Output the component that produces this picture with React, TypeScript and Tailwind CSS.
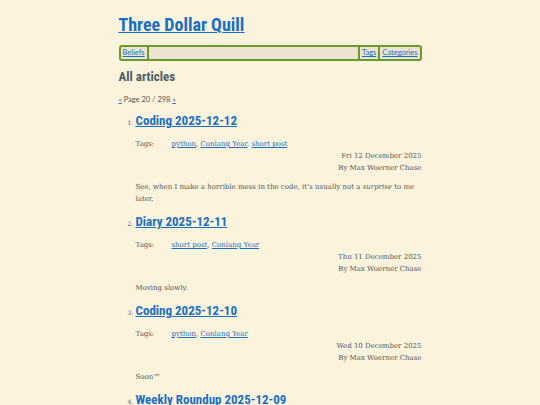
import React from "react";

const sans = { fontFamily: '"Liberation Sans Narrow", "Roboto Condensed", Lato, sans-serif' };
const small = { fontFamily: 'Lato, "Open Sans", sans-serif' };
const serif = { fontFamily: '"DejaVu Serif", "Liberation Serif", serif' };

type Post = { title: string; tags: string[]; date: string; body: React.ReactNode };

const posts: Post[] = [
  {
    title: "Coding 2025-12-12",
    tags: ["python", "Conlang Year", "short post"],
    date: "Fri 12 December 2025",
    body: (
      <>
        See, when I make a horrible mess in the code, it’s usually not a <em>surprise</em> to me later.
      </>
    ),
  },
  {
    title: "Diary 2025-12-11",
    tags: ["short post", "Conlang Year"],
    date: "Thu 11 December 2025",
    body: <>Moving slowly.</>,
  },
  {
    title: "Coding 2025-12-10",
    tags: ["python", "Conlang Year"],
    date: "Wed 10 December 2025",
    body: <>Soon™</>,
  },
  {
    title: "Weekly Roundup 2025-12-09",
    tags: ["Conlang Year"],
    date: "Tue 09 December 2025",
    body: <>Stuff.</>,
  },
];

export default function App() {
  return (
    <div className="h-[405px] w-full overflow-hidden bg-[#fbf3dc] text-[#555]">
      <div className="mx-auto w-[303px] pt-[14px]">
        <h1 className="text-[18px] font-bold leading-[22px] text-[#1a6fc4] underline" style={sans}>
          <a href="#">Three Dollar Quill</a>
        </h1>
        <nav
          className="mt-[9px] flex h-[16px] items-stretch rounded-[3px] border-2 border-[#6a9a2a] bg-[#ece4d0] text-[7.5px] leading-[12px]"
          style={small}
        >
          <a href="#" className="px-[2px] text-[#1a6fc4] underline">Beliefs</a>
          <span className="w-[2px] bg-[#6a9a2a]" />
          <span className="flex-1" />
          <span className="w-[2px] bg-[#6a9a2a]" />
          <a href="#" className="px-[2px] text-[#1a6fc4] underline">Tags</a>
          <span className="w-[2px] bg-[#6a9a2a]" />
          <a href="#" className="px-[2px] text-[#1a6fc4] underline">Categories</a>
        </nav>
        <h2 className="mt-[7px] text-[13px] font-bold leading-[18px] text-[#4c5a66]" style={sans}>
          All articles
        </h2>
        <p className="mt-[9px] text-[7.5px] leading-[10px] text-[#555]" style={small}>
          <a href="#" className="text-[#1a6fc4] underline">«</a> Page 20 / 298{" "}
          <a href="#" className="text-[#1a6fc4] underline">»</a>
        </p>
        <ol className="mt-[7px] pl-[17px]">
          {posts.map((p, i) => (
            <li key={i} className="mb-[8px]">
              <div className="flex items-baseline">
                <span className="-ml-[8px] w-[8px] text-[6px] text-[#555]" style={serif}>{i + 1}.</span>
                <a href="#" className="text-[13px] font-bold leading-[18px] text-[#1a6fc4] underline" style={sans}>
                  {p.title}
                </a>
              </div>
              <div className="mt-[8px] flex text-[7px] leading-[12px]" style={serif}>
                <span className="w-[36px]">Tags:</span>
                <span>
                  {p.tags.map((t, j) => (
                    <React.Fragment key={j}>
                      <a href="#" className="text-[#1a6fc4] underline">{t}</a>
                      {j < p.tags.length - 1 ? ", " : ""}
                    </React.Fragment>
                  ))}
                </span>
              </div>
              <div className="text-right text-[7px] leading-[12px]" style={serif}>
                <div>{p.date}</div>
                <div>By Max Woerner Chase</div>
              </div>
              <p className="mt-[7px] text-[7px] leading-[12px]" style={serif}>{p.body}</p>
            </li>
          ))}
        </ol>
      </div>
    </div>
  );
}
